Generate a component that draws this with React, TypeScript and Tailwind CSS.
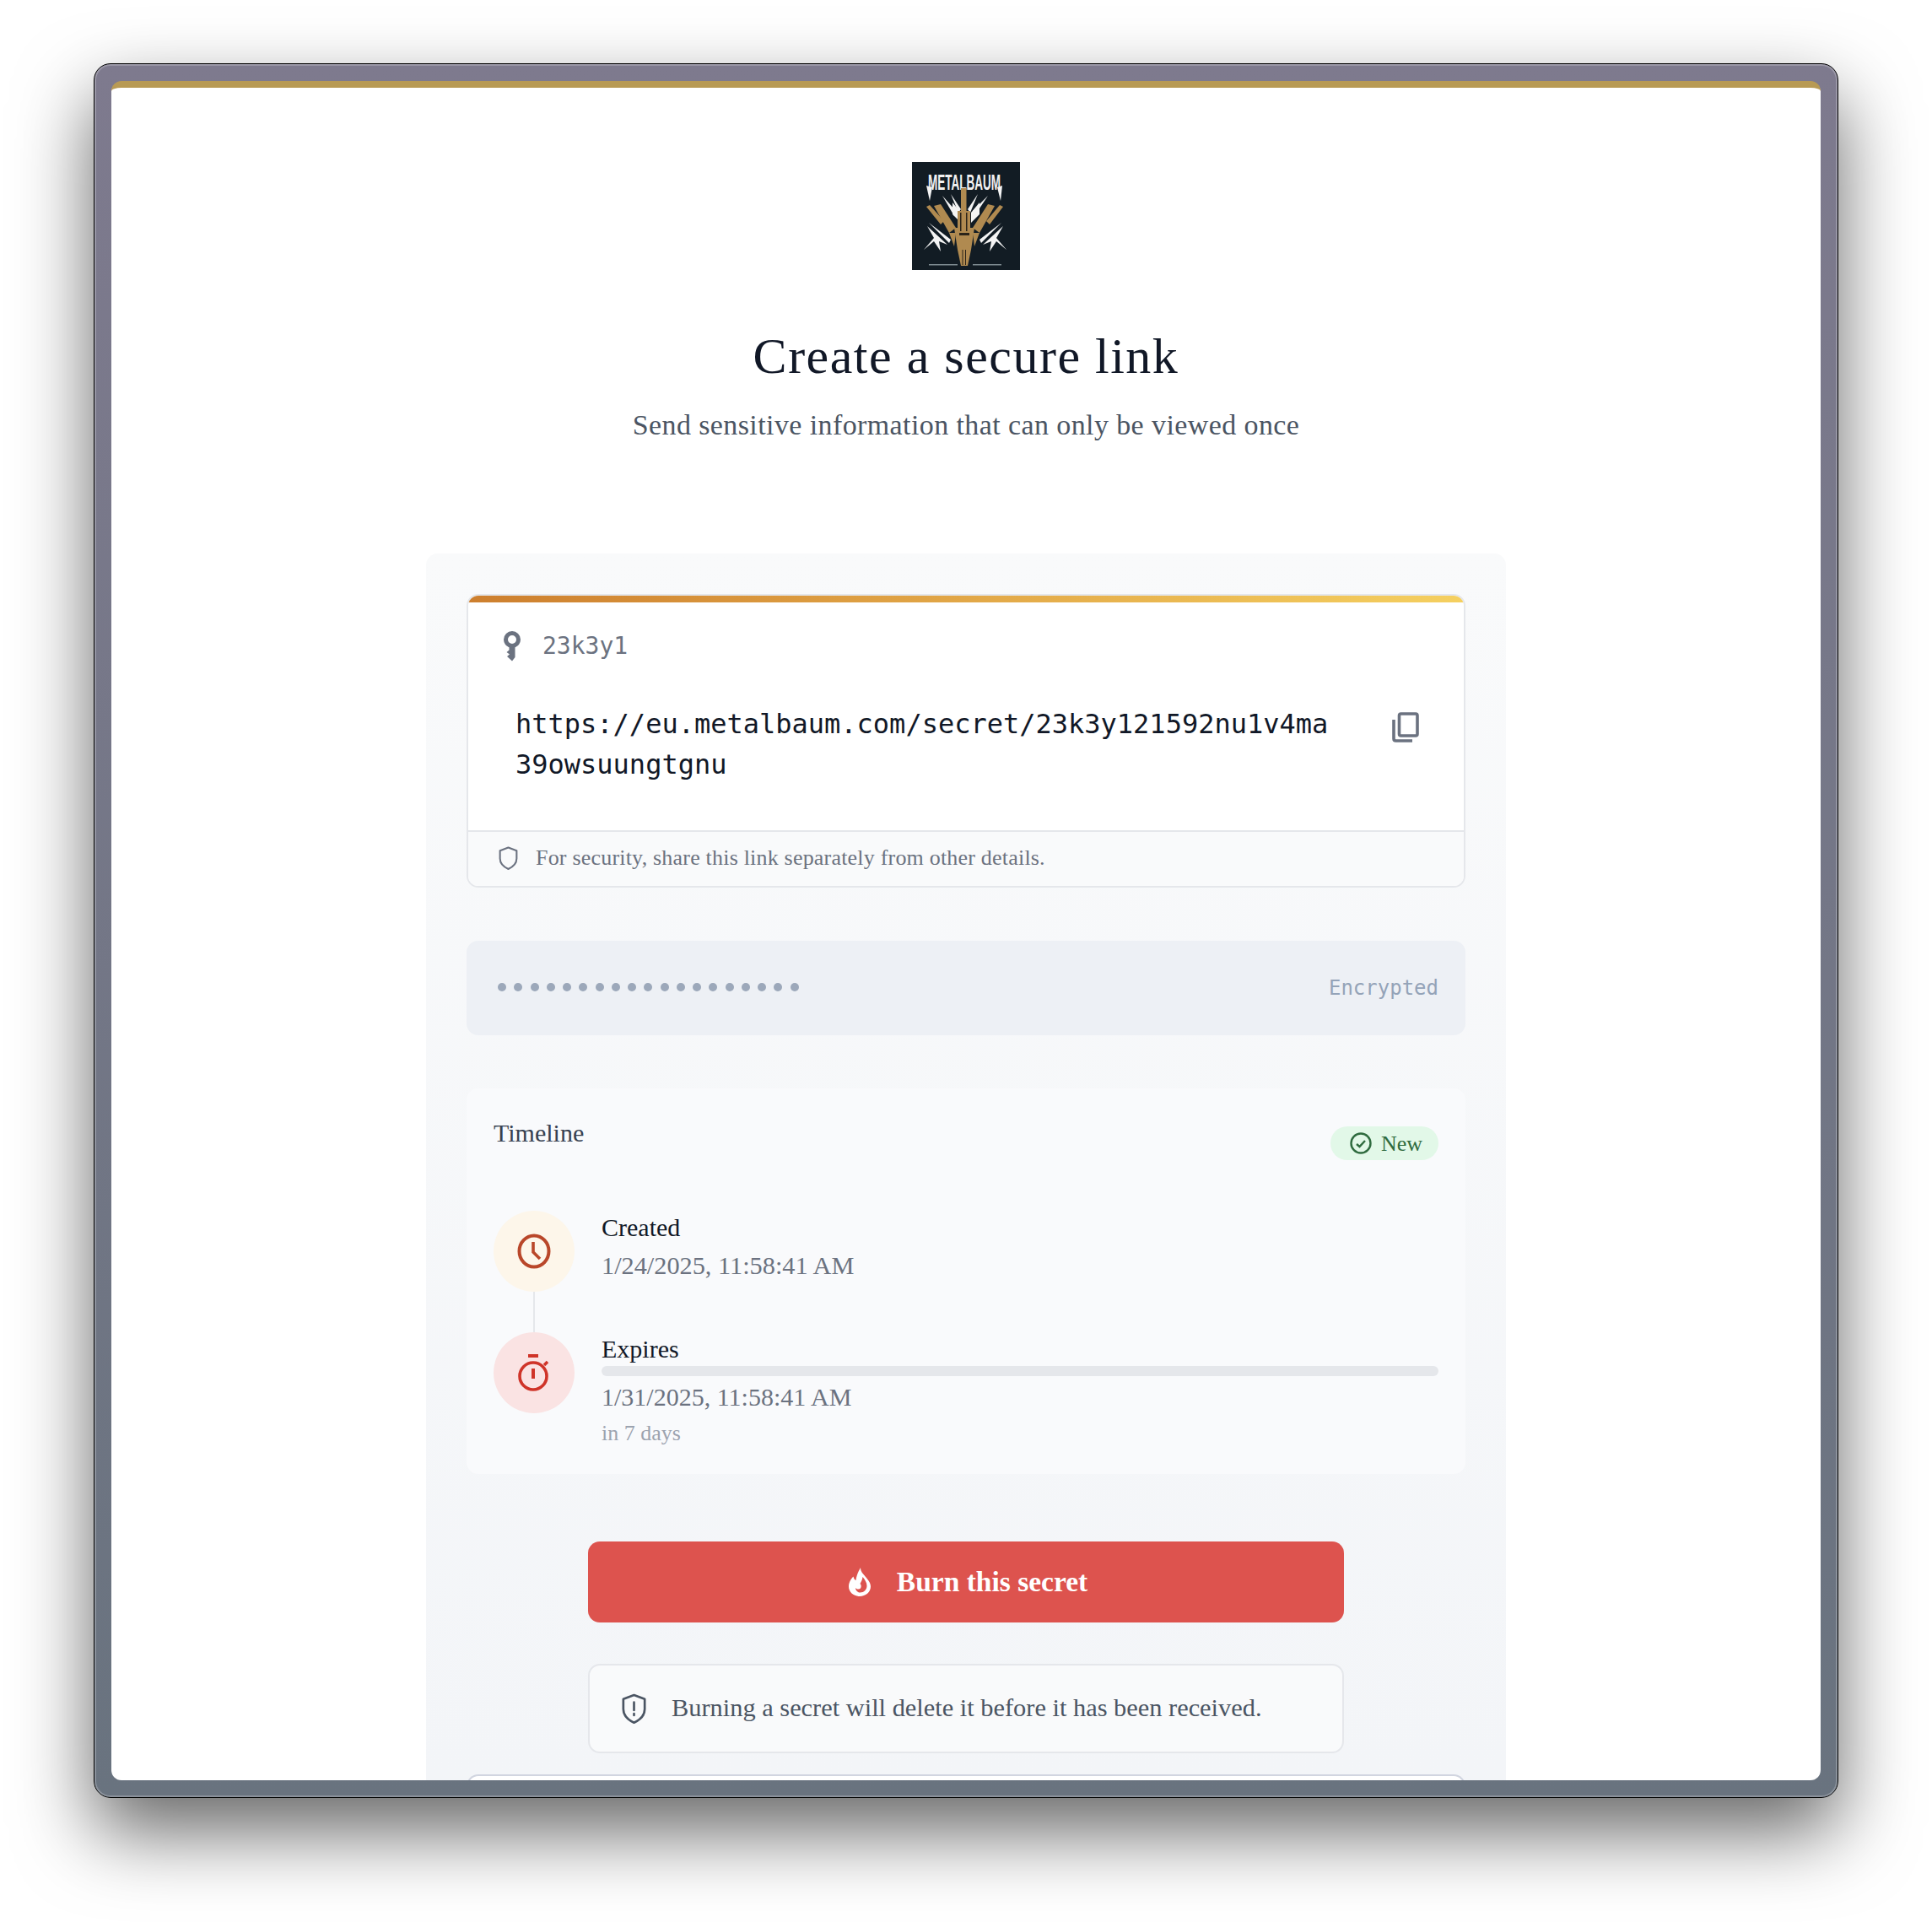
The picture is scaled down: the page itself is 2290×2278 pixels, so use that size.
import React from "react";

const Logo = () => (
  <svg width="128" height="128" viewBox="0 0 128 128" className="block">
    <rect width="128" height="128" fill="#121c24" />
    <text transform="translate(62 33) scale(0.52 1)" textAnchor="middle" fontFamily="'Liberation Sans',sans-serif" fontWeight="700" fontSize="26" fill="#f2f2f2">METALBAUM</text>
    <g fill="#f4f4f4">
      <polygon points="17,28 21,46 24,30" />
      <polygon points="107,28 105,46 101,30" />
      <polygon points="36,40 52,58 50,64" />
      <polygon points="46,38 58,56 55,60" />
      <polygon points="78,38 66,56 69,60" />
      <polygon points="90,40 72,58 74,64" />
      <polygon points="48,48 58,60 58,72 48,62" />
      <polygon points="80,48 70,60 70,72 80,62" />
      <polygon points="18,76 42,98 32,94 34,106 26,94 14,104 26,90" />
      <polygon points="108,76 84,98 94,94 92,106 100,94 112,104 100,90" />
      <polygon points="20,72 46,92 44,96" />
      <polygon points="106,72 80,92 82,96" />
    </g>
    <g fill="#b08a50">
      <rect x="58" y="31" width="6.500" height="30" />
      <rect x="54" y="58" width="15" height="24" />
      <polygon points="17,53 21,51 38,70 34,74" />
      <polygon points="26,52 34,50 52,78 44,84" />
      <polygon points="108,53 104,51 88,70 92,74" />
      <polygon points="98,52 90,50 72,78 80,84" />
      <polygon points="50,78 74,78 70,104 66,123 58,123 54,104" />
      <polygon points="44,84 52,84 50,100" />
      <polygon points="80,84 72,84 74,100" />
    </g>
    <g fill="#2b2419">
      <rect x="57" y="60" width="1.500" height="22" />
      <rect x="64" y="60" width="1.500" height="22" />
      <rect x="56" y="84" width="12" height="3" />
      <rect x="59.500" y="104" width="1" height="18" />
      <rect x="63" y="104" width="1" height="18" />
    </g>
    <g fill="#7d8a90">
      <rect x="20" y="121" width="34" height="1.500" />
      <rect x="72" y="121" width="34" height="1.500" />
    </g>
  </svg>
);

const KeyIcon = () => (
  <svg width="22" height="36" viewBox="0 0 22 36" className="block">
    <circle cx="11" cy="10" r="7.500" fill="none" stroke="#6b7280" strokeWidth="5" />
    <path d="M7.500 16h7v15l-3.500 4.500L5 30l3-2.500L4.500 25l3-2.500z" fill="#6b7280" />
  </svg>
);

const CopyIcon = () => (
  <svg width="32" height="36" viewBox="0 0 32 36" fill="none" stroke="#6b7280" strokeWidth="3.600" className="block">
    <rect x="8.500" y="2" width="21.500" height="26" rx="2" />
    <path d="M2 9v22.500c0 1.400 1 2.500 2.500 2.500H24" />
  </svg>
);

const Shield = ({ w, h, color, bang }: { w: number; h: number; color: string; bang?: boolean }) => (
  <svg width={w} height={h} viewBox="0 0 24 27" fill="none" stroke={color} strokeWidth="2" strokeLinejoin="round" className="block shrink-0">
    <path d="M12 1.500 21.500 5v9c0 6-4 9.500-9.500 12C6.500 23.500 2.500 20 2.500 14V5z" />
    {bang && <path d="M12 8v7M12 18v1.500" strokeLinecap="round" />}
  </svg>
);

const ClockIcon = () => (
  <svg width="40" height="42" viewBox="0 0 40 42" fill="none" stroke="#b9472a" strokeWidth="4" className="block">
    <ellipse cx="20" cy="21" rx="17.500" ry="18.500" />
    <path d="M19 10v12l8 8" strokeWidth="3.600" />
  </svg>
);

const TimerIcon = () => (
  <svg width="38" height="44" viewBox="0 0 38 44" fill="none" stroke="#cf3429" strokeWidth="3.600" className="block">
    <circle cx="18" cy="26" r="16" />
    <path d="M12 2h12" strokeWidth="4" />
    <path d="M18 17v12" strokeWidth="4" />
    <path d="M31 13l4-4" />
  </svg>
);

const FlameIcon = () => (
  <svg width="28" height="34" viewBox="0 0 26 34" className="block">
    <path
      fillRule="evenodd"
      fill="#ffffff"
      d="M14 0c0 5 3 7 6 11 3 3.500 6 7 6 11.500C26 29 20 34 13 34S0 29 0 22.500C0 17 3 13 5.500 10.500 6 13 7 14.500 8.500 15 9 10 11 5 14 0zM16.500 11c-.5 4-2 6-3 8 1.500 1.500 1.500 4 .5 5.500-1.500 1.500-4 1.500-6-.5C8 27 10.500 29.500 13.500 29.500 18 29.500 21.500 26 21.500 21.500 21.500 17.500 19 14 16.500 11z"
    />
  </svg>
);

const CheckCircle = () => (
  <svg width="26" height="26" viewBox="0 0 26 26" fill="none" stroke="#2f6b3f" strokeWidth="2.400" className="block shrink-0">
    <circle cx="13" cy="13" r="11.500" />
    <path d="M8 14l3.500 3L18 10" />
  </svg>
);

const dots = Array.from({ length: 19 });

export default function App() {
  return (
    <div className="w-[2290px] h-[2278px] bg-white pt-[75px] pl-[111px] overflow-hidden [font-family:'Liberation_Serif',serif]">
      <div className="w-[2068px] h-[2056px] border border-black rounded-[20px] p-[20px] bg-gradient-to-b from-[#7e7a8e] to-[#69737f] shadow-[0_40px_90px_rgba(0,0,0,0.6),inset_0_0_0_2px_rgba(255,255,255,0.22)]">
        <div className="h-[2014px] rounded-[12px] overflow-hidden bg-white border-t-8 border-[#b89a54] flex flex-col items-center">
          <div className="mt-[88px] w-[128px] h-[128px] shrink-0">
            <Logo />
          </div>
          <h1 className="mt-[72px] h-[60px] leading-[60px] text-[60px] font-normal text-[#111827] tracking-[1.500px]">Create a secure link</h1>
          <p className="mt-[34px] h-[36px] leading-[36px] text-[34px] text-[#4b5563] tracking-[0.400px]">Send sensitive information that can only be viewed once</p>

          <div className="mt-[134px] w-[1280px] grow rounded-t-[14px] bg-gradient-to-b from-[#f9fafb] to-[#f3f5f8] px-[48px] pt-[48px] overflow-hidden">
            <div className="h-[348px] border-2 border-[#e5e7eb] rounded-[14px] bg-white overflow-hidden flex flex-col">
              <div className="h-[8px] shrink-0 bg-gradient-to-r from-[#cd7f2e] to-[#f5d060]" />
              <div className="mt-[34px] ml-[41px] flex items-center h-[36px] gap-[25px]">
                <KeyIcon />
                <span className="text-[28px] text-[#6b7280] [font-family:'DejaVu_Sans_Mono',monospace]">23k3y1</span>
              </div>
              <div className="mt-[50px] ml-[56px] mr-[53px] flex justify-between items-start grow">
                <div className="w-[975px] break-all text-[32px] leading-[48px] text-[#111827] [font-family:'DejaVu_Sans_Mono',monospace]">
                  https://eu.metalbaum.com/secret/23k3y121592nu1v4ma39owsuungtgnu
                </div>
                <div className="mt-[10px]">
                  <CopyIcon />
                </div>
              </div>
              <div className="h-[66px] shrink-0 border-t-2 border-[#e5e7eb] bg-[#f9fafb] flex items-center pl-[35px] gap-[20px] pb-[3px]">
                <Shield w={25} h={28} color="#6b7280" />
                <span className="text-[26px] text-[#6b7280] tracking-[0.200px]">For security, share this link separately from other details.</span>
              </div>
            </div>

            <div className="mt-[63px] h-[112px] rounded-[14px] bg-[#edf0f5] flex items-center justify-between pl-[37px] pr-[32px]">
              <div className="flex gap-[9.250px] -mt-[2px]">
                {dots.map((_, i) => (
                  <span key={i} className="block w-[10px] h-[10px] rounded-full bg-[#9ca8ba]" />
                ))}
              </div>
              <span className="text-[24px] text-[#94a3b8] [font-family:'DejaVu_Sans_Mono',monospace]">Encrypted</span>
            </div>

            <div className="mt-[63px] h-[457px] rounded-[14px] bg-[#f9fafc] px-[32px] pt-[35px]">
              <div className="flex justify-between items-start">
                <span className="text-[30px] leading-[36px] text-[#374151]">Timeline</span>
                <span className="mt-[10px] h-[40px] w-[128px] rounded-full bg-[#e2f8e8] flex items-center pl-[23px] gap-[11px] text-[26px] text-[#2f6b3f]">
                  <CheckCircle />
                  New
                </span>
              </div>
              <div className="mt-[60px] flex">
                <div className="w-[96px] shrink-0 flex flex-col items-center">
                  <div className="w-[96px] h-[96px] rounded-full bg-[#fdf6ea] flex items-center justify-center">
                    <ClockIcon />
                  </div>
                  <div className="w-[2px] h-[48px] bg-[#e5e7eb]" />
                  <div className="w-[96px] h-[96px] rounded-full bg-[#fae3e3] flex items-center justify-center">
                    <TimerIcon />
                  </div>
                </div>
                <div className="ml-[32px] grow">
                  <div className="h-[144px]">
                    <div className="text-[30px] leading-[40px] text-[#111827]">Created</div>
                    <div className="mt-[5px] text-[30.300px] leading-[40px] text-[#6b7280]">1/24/2025, 11:58:41 AM</div>
                  </div>
                  <div className="text-[30px] leading-[40px] text-[#111827]">Expires</div>
                  <div className="h-[12px] rounded-full bg-[#e5e7eb]" />
                  <div className="mt-[5px] text-[30px] leading-[40px] text-[#6b7280]">1/31/2025, 11:58:41 AM</div>
                  <div className="mt-[3px] text-[26px] leading-[40px] text-[#9ca3af]">in 7 days</div>
                </div>
              </div>
            </div>

            <div className="mt-[80px] ml-[144px] w-[896px] h-[96px] rounded-[14px] bg-[#dd534e] flex items-center justify-center gap-[30px] pl-[4px] text-white text-[33.500px] font-bold">
              <FlameIcon />
              Burn this secret
            </div>

            <div className="mt-[49px] ml-[144px] w-[896px] h-[106px] rounded-[14px] border-2 border-[#e5e7eb] bg-[#f9fafb] flex items-center pl-[36px] gap-[28px] text-[30.400px] text-[#4b5563]">
              <Shield w={33} h={36} color="#4b5563" bang />
              Burning a secret will delete it before it has been received.
            </div>

            <div className="mt-[25px] h-[40px] rounded-t-[14px] border-2 border-b-0 border-[#d1d5e0] bg-white" />
          </div>
        </div>
      </div>
    </div>
  );
}
